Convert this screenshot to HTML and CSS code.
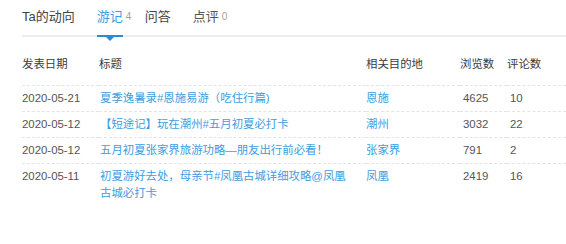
FILE: index.html
```html
<!DOCTYPE html>
<html lang="zh-CN">
<head>
<meta charset="utf-8">
<title>游记</title>
<link rel="stylesheet" href="styles.css">
</head>
<body>
<div class="page">
  <nav class="tabs">
    <a class="tab">Ta的动向</a>
    <a class="tab active">游记<span class="cnt">4</span></a>
    <a class="tab">问答</a>
    <a class="tab muted">点评<span class="cnt">0</span></a>
  </nav>
  <table class="notes">
    <colgroup>
      <col class="c-date">
      <col class="c-title">
      <col class="c-dest">
      <col class="c-views">
      <col class="c-comments">
    </colgroup>
    <thead>
      <tr>
        <th>发表日期</th>
        <th>标题</th>
        <th>相关目的地</th>
        <th>浏览数</th>
        <th>评论数</th>
      </tr>
    </thead>
    <tbody>
      <tr>
        <td class="date">2020-05-21</td>
        <td><a class="link">夏季逸暑录#恩施易游（吃住行篇)</a></td>
        <td><a class="link">恩施</a></td>
        <td class="num">4625</td>
        <td class="num">10</td>
      </tr>
      <tr>
        <td class="date">2020-05-12</td>
        <td><a class="link">【短途记】玩在潮州#五月初夏必打卡</a></td>
        <td><a class="link">潮州</a></td>
        <td class="num">3032</td>
        <td class="num">22</td>
      </tr>
      <tr>
        <td class="date">2020-05-12</td>
        <td><a class="link">五月初夏张家界旅游功略—朋友出行前必看！</a></td>
        <td><a class="link">张家界</a></td>
        <td class="num">791</td>
        <td class="num">2</td>
      </tr>
      <tr>
        <td class="date">2020-05-11</td>
        <td><a class="link">初夏游好去处，母亲节#凤凰古城详细攻略@凤凰古城必打卡</a></td>
        <td><a class="link">凤凰</a></td>
        <td class="num">2419</td>
        <td class="num">16</td>
      </tr>
    </tbody>
  </table>
</div>
</body>
</html>
```
FILE: styles.css
```css
* { box-sizing: border-box; }

html, body {
  margin: 0;
  padding: 0;
  background: #fff;
}

body {
  font-family: "Liberation Sans", Arial, "Noto Sans CJK SC", sans-serif;
  color: #444;
}

.page {
  padding-left: 22px;
}

.tabs {
  display: flex;
  border-bottom: 2px solid #ececec;
}

.tab {
  position: relative;
  display: block;
  font-size: 13px;
  line-height: 18px;
  padding: 8px 0 9px;
  margin-right: 22px;
  color: #444;
  cursor: pointer;
}

.tab.muted { color: #555; }

.tab.active {
  color: #3d9de0;
}

.tab.active::after {
  content: "";
  position: absolute;
  left: 0;
  right: 0;
  bottom: -2px;
  height: 2px;
  background: #2a8bd2;
}

.tab.active::before {
  content: "";
  position: absolute;
  left: 50%;
  bottom: -6px;
  margin-left: -4px;
  border-left: 4px solid transparent;
  border-right: 4px solid transparent;
  border-top: 4px solid #2a8bd2;
}

.cnt {
  position: absolute;
  left: 100%;
  top: 9px;
  margin-left: 3px;
  font-size: 10px;
  line-height: 16px;
  color: #a0a0a0;
}

.notes {
  width: 100%;
  border-collapse: collapse;
  table-layout: fixed;
  font-size: 11.4px;
}

.c-date { width: 77px; }
.c-title { width: 267px; }
.c-dest { width: 94px; }
.c-views { width: 47px; }

.notes th {
  text-align: left;
  font-weight: normal;
  color: #3a3a3a;
  line-height: 16px;
  padding: 19px 0 13px;
  border-bottom: 1px dashed #e4e4e4;
}

.notes td {
  vertical-align: top;
  line-height: 17px;
  padding: 4px 14px 4px 0;
  border-bottom: 1px dashed #e4e4e4;
  color: #555;
}

.notes tbody tr:last-child td {
  border-bottom: none;
}

.notes td.num {
  padding-left: 3px;
  padding-right: 0;
}

.link {
  color: #3d9de0;
  text-decoration: none;
  cursor: pointer;
}

.notes td:nth-child(2) { padding-left: 1px; }
```
